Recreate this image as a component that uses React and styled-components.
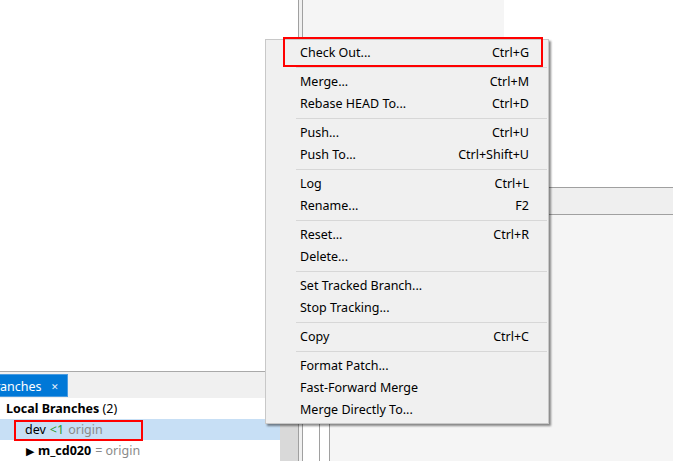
import React from "react";
import styled, { createGlobalStyle } from "styled-components";

const Global = createGlobalStyle`
  html, body { margin: 0; padding: 0; background: #fff; }
  body { font-family: "Noto Sans", "Liberation Sans", sans-serif; font-size: 12.5px; color: #000; }
  * { box-sizing: border-box; }
`;

const Frame = styled.div`
  position: relative;
  display: flex;
  width: 673px;
  height: 461px;
  overflow: hidden;
  background: #fff;
`;

const LeftColumn = styled.div`
  width: 298px;
  display: flex;
  flex-direction: column;
`;

const Blank = styled.div`
  flex: 1;
  background: #fff;
`;

const BranchPanel = styled.div`
  height: 90px;
  border-top: 1px solid #a9a9a9;
  display: flex;
  flex-direction: column;
`;

const TabBar = styled.div`
  height: 27px;
  background: #f0f0f0;
  display: flex;
  align-items: flex-end;
  padding-bottom: 1px;
  overflow: hidden;
`;

const Tab = styled.div`
  height: 23px;
  margin-left: -24px;
  padding: 1px 8px 0 10px;
  background: #0078d7;
  border: 1px solid #4a9be0;
  color: #fff;
  display: flex;
  align-items: center;
  gap: 9px;
  font-size: 12.5px;
`;

const Close = styled.span`
  font-size: 9px;
  line-height: 1;
  color: #e6f0fa;
`;

const TreeArea = styled.div`
  flex: 1;
  display: flex;
`;

const Tree = styled.div`
  flex: 1;
  display: flex;
  flex-direction: column;
`;

const ScrollTrack = styled.div`
  width: 18px;
  background: #d9d9d9;
`;

const Row = styled.div`
  position: relative;
  height: 21px;
  display: flex;
  align-items: center;
  padding-left: ${(p) => p.$indent}px;
  padding-bottom: 1px;
  background: ${(p) => (p.$selected ? "#c7dff5" : "transparent")};
  white-space: nowrap;
  gap: 4px;
`;

const Bold = styled.span`
  font-weight: 700;
`;

const Ahead = styled.span`
  color: #2f9a2f;
`;

const Remote = styled.span`
  color: #8a8a8a;
`;

const Arrow = styled.span`
  font-size: 11px;
`;

const Marker = styled.div`
  position: absolute;
  border: 2px solid #ff0000;
  left: ${(p) => p.$l}px;
  top: ${(p) => p.$t}px;
  width: ${(p) => p.$w}px;
  height: ${(p) => p.$h}px;
  pointer-events: none;
`;

const Splitter = styled.div`
  width: 5px;
  border-left: 1px solid #a0a0a0;
  border-right: 1px solid #a0a0a0;
  background: #f0f0f0;
`;

const RightColumn = styled.div`
  flex: 1;
  display: flex;
  flex-direction: column;
`;

const TopRow = styled.div`
  height: 187px;
  display: flex;
`;

const GreyPane = styled.div`
  width: 201px;
  background: #f5f5f5;
`;

const WhitePane = styled.div`
  flex: 1;
  background: #fff;
`;

const Band = styled.div`
  height: 28px;
  background: #efefef;
  border-top: 1px solid #a0a0a0;
  border-bottom: 1px solid #a0a0a0;
`;

const BottomRow = styled.div`
  flex: 1;
  display: flex;
`;

const Strip = styled.div`
  width: ${(p) => p.$w}px;
  background: #fff;
  border-right: 1px solid #a0a0a0;
`;

const Body = styled.div`
  flex: 1;
  background: #f5f5f5;
`;

const Menu = styled.div`
  position: absolute;
  left: 265px;
  top: 39px;
  width: 284px;
  padding: 2px 0;
  background: #f0f0f0;
  border: 1px solid #c8c8c8;
  box-shadow: 2px 2px 2px rgba(0, 0, 0, 0.45);
  display: flex;
  flex-direction: column;
`;

const Item = styled.div`
  height: 22px;
  display: flex;
  align-items: center;
  justify-content: space-between;
  padding: 0 19px 2px 34px;
  font-size: 12.5px;
  white-space: nowrap;
`;

const Sep = styled.div`
  height: 7px;
  display: flex;
  align-items: center;
  padding-left: 30px;
  padding-right: 1px;
  &::after {
    content: "";
    flex: 1;
    height: 1px;
    background: #d7d7d7;
  }
`;

const menu = [
  ["Check Out...", "Ctrl+G"],
  null,
  ["Merge...", "Ctrl+M"],
  ["Rebase HEAD To...", "Ctrl+D"],
  null,
  ["Push...", "Ctrl+U"],
  ["Push To...", "Ctrl+Shift+U"],
  null,
  ["Log", "Ctrl+L"],
  ["Rename...", "F2"],
  null,
  ["Reset...", "Ctrl+R"],
  ["Delete...", ""],
  null,
  ["Set Tracked Branch...", ""],
  ["Stop Tracking...", ""],
  null,
  ["Copy", "Ctrl+C"],
  null,
  ["Format Patch...", ""],
  ["Fast-Forward Merge", ""],
  ["Merge Directly To...", ""],
];

export default function App() {
  return (
    <>
      <Global />
      <Frame>
        <LeftColumn>
          <Blank />
          <BranchPanel>
            <TabBar>
              <Tab>
                Branches <Close>✕</Close>
              </Tab>
            </TabBar>
            <TreeArea>
              <Tree>
                <Row $indent={6}>
                  <span>
                    <Bold>Local Branches</Bold> (2)
                  </span>
                </Row>
                <Row $indent={25} $selected>
                  <span>dev</span>
                  <Ahead>&lt;1</Ahead>
                  <Remote>origin</Remote>
                  <Marker $l={14} $t={1} $w={129} $h={21} />
                </Row>
                <Row $indent={26}>
                  <Arrow>▶</Arrow>
                  <Bold>m_cd020</Bold>
                  <Remote>= origin</Remote>
                </Row>
              </Tree>
              <ScrollTrack />
            </TreeArea>
          </BranchPanel>
        </LeftColumn>
        <Splitter />
        <RightColumn>
          <TopRow>
            <GreyPane />
            <WhitePane />
          </TopRow>
          <Band />
          <BottomRow>
            <Strip $w={17} />
            <Strip $w={10} />
            <Body />
          </BottomRow>
        </RightColumn>
        <Menu>
          {menu.map((m, i) =>
            m ? (
              <Item key={i}>
                <span>{m[0]}</span>
                <span>{m[1]}</span>
              </Item>
            ) : (
              <Sep key={i} />
            )
          )}
          <Marker $l={17} $t={-3} $w={260} $h={30} />
        </Menu>
      </Frame>
    </>
  );
}
